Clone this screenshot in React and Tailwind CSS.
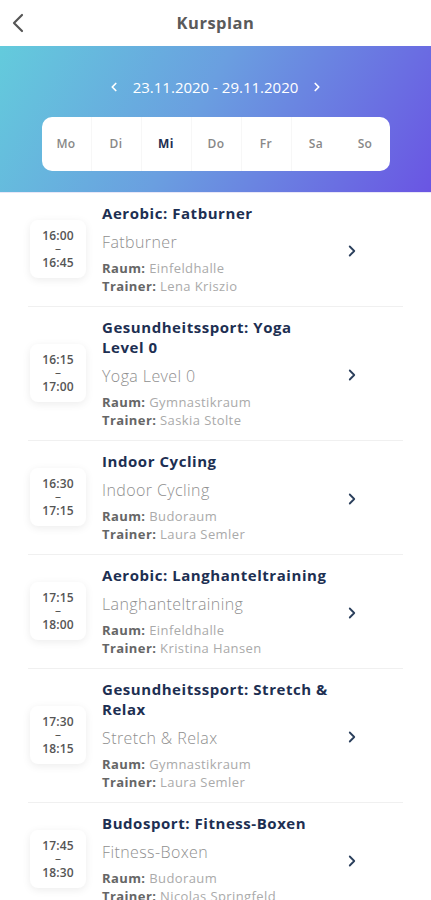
import { ChevronLeft, ChevronRight } from 'lucide-react'

const courses = [
  { title: 'Aerobic: Fatburner', sub: 'Fatburner', from: '16:00', to: '16:45', room: 'Einfeldhalle', trainer: 'Lena Kriszio' },
  { title: 'Gesundheitssport: Yoga Level 0', sub: 'Yoga Level 0', from: '16:15', to: '17:00', room: 'Gymnastikraum', trainer: 'Saskia Stolte' },
  { title: 'Indoor Cycling', sub: 'Indoor Cycling', from: '16:30', to: '17:15', room: 'Budoraum', trainer: 'Laura Semler' },
  { title: 'Aerobic: Langhanteltraining', sub: 'Langhanteltraining', from: '17:15', to: '18:00', room: 'Einfeldhalle', trainer: 'Kristina Hansen' },
  { title: 'Gesundheitssport: Stretch & Relax', sub: 'Stretch & Relax', from: '17:30', to: '18:15', room: 'Gymnastikraum', trainer: 'Laura Semler' },
  { title: 'Budosport: Fitness-Boxen', sub: 'Fitness-Boxen', from: '17:45', to: '18:30', room: 'Budoraum', trainer: 'Nicolas Springfeld' }
]

const days = ['Mo', 'Di', 'Mi', 'Do', 'Fr', 'Sa', 'So']

function CourseRow({ c }) {
  return (
    <div className="flex items-center border-b border-[#f0f0f0] pt-[10px] pb-[11px]">
      <div className="w-[56px] h-[58px] ml-[2px] rounded-lg bg-white shadow-[0_2px_8px_rgba(0,0,0,0.08)] flex flex-col items-center justify-center text-[12px] font-semibold leading-[13.5px] tracking-[0.2px] text-[#555]">
        <span>{c.from}</span>
        <span className="font-normal">–</span>
        <span>{c.to}</span>
      </div>
      <div className="ml-[16px] flex-1 min-w-0">
        <div className="w-[229px] text-[15px] leading-[20px] font-bold tracking-[0.55px] text-[#1d2f52]">{c.title}</div>
        <div className="mt-[9px] text-[16px] leading-[20px] font-light tracking-[0.4px] text-[#8f8f8f]">{c.sub}</div>
        <div className="mt-[7px] text-[13px] leading-[18px] tracking-[0.4px] text-[#aaa]">
          <span className="font-bold text-[#666]">Raum:</span> {c.room}
        </div>
        <div className="text-[13px] leading-[18px] tracking-[0.4px] text-[#aaa]">
          <span className="font-bold text-[#666]">Trainer:</span> {c.trainer}
        </div>
      </div>
      <ChevronRight className="w-[18px] h-[18px] text-[#2b3f5c] mr-[42px] mt-[4px]" strokeWidth={2.4} />
    </div>
  )
}

export default function App() {
  return (
    <div className="w-[431px] h-[900px] overflow-hidden bg-white font-['Open_Sans',sans-serif]">
      <header className="h-[46px] relative flex items-center justify-center">
        <ChevronLeft className="absolute left-[2px] top-[7px] w-[32px] h-[32px] text-[#555]" strokeWidth={1.6} />
        <h1 className="text-[16.5px] font-bold tracking-[0.5px] text-[#5a5a5a]">Kursplan</h1>
      </header>

      <section className="h-[146px] bg-[linear-gradient(120deg,#63cbdc_0%,#6a9fe0_45%,#6a55e3_100%)] flex flex-col items-center pt-[31px]">
        <div className="flex items-center gap-[12px] text-white">
          <ChevronLeft className="w-[14px] h-[14px]" strokeWidth={3} />
          <span className="text-[15px] leading-[20px]">23.11.2020 - 29.11.2020</span>
          <ChevronRight className="w-[14px] h-[14px]" strokeWidth={3} />
        </div>
        <div className="mt-[20px] w-[348px] h-[54px] bg-white rounded-[10px] flex">
          {days.map((d, i) => (
            <div
              key={d}
              className={`flex-1 flex items-center justify-center text-[12px] tracking-[0.4px] ${i > 0 && i < 6 ? 'border-l border-[#f7f7f7]' : ''} ${d === 'Mi' ? 'text-[#1d2f52] font-bold' : 'text-[#888] font-semibold'}`}
            >
              {d}
            </div>
          ))}
        </div>
      </section>

      <main className="px-[28px] border-t border-[#e8e6f7]">
        {courses.map((c) => (
          <CourseRow key={c.title} c={c} />
        ))}
      </main>
    </div>
  )
}
